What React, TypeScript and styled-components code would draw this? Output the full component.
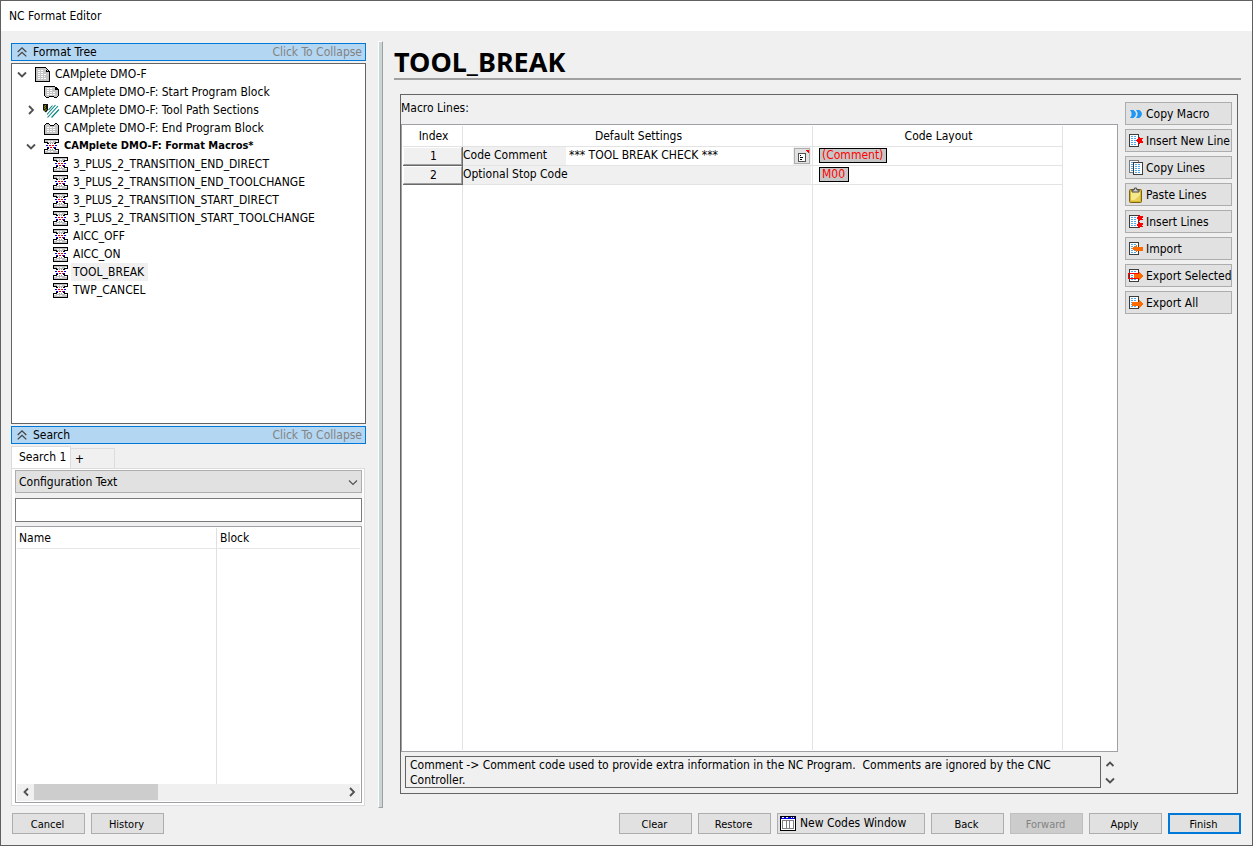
import React from "react";
import styled, { createGlobalStyle, css } from "styled-components";

const GlobalStyle = createGlobalStyle`
  *, *::before, *::after { box-sizing: border-box; }
  body {
    margin: 0;
    background: #f0f0f0;
    color: #000;
    font: 12px/18px "DejaVu Sans Condensed", "Noto Sans", sans-serif;
  }
  button, input, select { font: inherit; color: inherit; margin: 0; border-radius: 0; }
  ul { list-style: none; margin: 0; padding: 0; }
  svg { display: block; flex: none; }
`;

/* ---------- window frame ---------- */

const Window = styled.div`
  display: flex;
  flex-direction: column;
  min-height: 100vh;
  border: 1px solid #606060;
  background: #f0f0f0;
`;

const TitleBar = styled.header`
  height: 30px;
  padding: 0 8px;
  line-height: 30px;
  background: #fff;
`;

const Main = styled.main`
  flex: 1;
  display: flex;
  padding: 10px 11px 0 10px;
`;

const LeftColumn = styled.div`
  flex: none;
  width: 355px;
  display: flex;
  flex-direction: column;
  gap: 2px;
  padding: 2px 0;
`;

const Splitter = styled.div`
  flex: none;
  width: 5px;
  margin: 0 11px 0 12px;
  background: #c8d7d6;
  border: solid;
  border-width: 1px;
  border-color: #fff #a0a0a0 #a0a0a0 #fff;
`;

const RightColumn = styled.div`
  flex: 1;
  min-width: 0;
  display: flex;
  flex-direction: column;
`;

/* ---------- collapsible sections ---------- */

const Section = styled.section`
  flex: 1 1 0;
  display: flex;
  flex-direction: column;
  gap: 2px;
`;

const CollapseBar = styled.button`
  flex: none;
  display: flex;
  align-items: center;
  height: 18px;
  padding: 0 3px 0 5px;
  border: 1px solid #0078d7;
  background: #b3d6f2;
  line-height: 16px;
  text-align: left;
`;

const CollapseTitle = styled.span`
  flex: 1;
  padding-left: 6px;
`;

const CollapseHint = styled.span`
  color: #838383;
`;

const TreeBox = styled.div`
  flex: 1;
  padding-top: 1px;
  border: 1px solid #646464;
  background: #fff;
`;

const TreeRow = styled.div<{ $level: number }>`
  display: flex;
  align-items: center;
  height: 18px;
  padding-left: ${(p) => 4 + p.$level * 9}px;
  white-space: nowrap;
`;

const Twisty = styled.button`
  width: 11px;
  height: 16px;
  margin-right: 8px;
  padding: 0;
  border: 0;
  background: none;
  display: flex;
  align-items: center;
  justify-content: center;
`;

const TwistySpace = styled.span`
  width: 11px;
  margin-right: 8px;
`;

const TreeLabel = styled.span<{ $bold?: boolean; $selected?: boolean }>`
  margin-left: 3px;
  padding: 0 4px 0 2px;
  background: ${(p) => (p.$selected ? "#f0f0f0" : "transparent")};
  ${(p) =>
    p.$bold &&
    css`
      font-size: 11px;
      font-weight: 700;
    `}
`;

/* ---------- search ---------- */

const SearchBody = styled.div`
  flex: 1;
  display: flex;
  flex-direction: column;
  margin-right: 1px;
`;

const Tabs = styled.div`
  display: flex;
  align-items: flex-end;
  height: 22px;
`;

const Tab = styled.button<{ $active?: boolean }>`
  height: ${(p) => (p.$active ? 23 : 20)}px;
  width: ${(p) => (p.$active ? 60 : 44)}px;
  margin-bottom: ${(p) => (p.$active ? -1 : 0)}px;
  padding: ${(p) => (p.$active ? "0 0 2px 7px" : "1px 0 0 4px")};
  border: 1px solid #dcdcdc;
  border-bottom: 0;
  border-left-width: ${(p) => (p.$active ? 1 : 0)}px;
  background: ${(p) => (p.$active ? "#fff" : "#f0f0f0")};
  text-align: left;
  white-space: nowrap;
`;

const TabPanel = styled.div`
  flex: 1;
  display: flex;
  flex-direction: column;
  padding: 1px 2px 2px 3px;
  border: 1px solid #dcdcdc;
  background: #fff;
`;

const SearchForm = styled.div`
  flex: 1;
  display: flex;
  flex-direction: column;
  background: #f0f0f0;
`;

const SelectWrap = styled.div`
  position: relative;
  margin-bottom: 5px;
`;

const Select = styled.select`
  display: block;
  width: 100%;
  height: 23px;
  padding: 2px 24px 0 3px;
  border: 1px solid #adadad;
  background: #e1e1e1;
  appearance: none;
`;

const SelectArrow = styled.span`
  position: absolute;
  right: 4px;
  top: 7px;
  pointer-events: none;
`;

const SearchInput = styled.input`
  width: 100%;
  height: 24px;
  margin-bottom: 4px;
  padding: 0 4px;
  border: 1px solid #7a7a7a;
  background: #fff;
`;

const ResultBox = styled.div`
  flex: 1;
  display: flex;
  flex-direction: column;
  padding: 1px;
  border: 1px solid #a0a0a4;
  background: #fff;
`;

const ResultArea = styled.div`
  flex: 1;
  display: flex;
`;

const ResultTable = styled.table`
  width: 100%;
  border-collapse: separate;
  border-spacing: 0;
  table-layout: fixed;

  th, td {
    padding: 0 3px;
    text-align: left;
    font-weight: 400;
  }
  th {
    height: 21px;
    border-bottom: 1px solid #e5e5e5;
  }
  th:first-child, td:first-child {
    width: 200px;
    padding-left: 2px;
    border-right: 1px solid #e0e0e0;
  }
`;

const ScrollBar = styled.div`
  display: flex;
  height: 17px;
  padding-bottom: 1px;
  background: #f0f0f0;
`;

const ScrollTrack = styled.div`
  flex: 1;
`;

const ScrollThumb = styled.div`
  width: 40%;
  height: 100%;
  background: #cdcdcd;
`;

const ScrollButton = styled.button`
  width: 17px;
  height: 16px;
  padding: 0;
  border: 0;
  background: none;
  display: flex;
  align-items: center;
  justify-content: center;
`;

/* ---------- macro editor ---------- */

const Title = styled.h1`
  height: 39px;
  margin: 0 0 14px;
  border-bottom: 2px solid #a0a0a0;
  font: 700 27px/42px "Noto Sans", "Open Sans", sans-serif;
`;

const Group = styled.section`
  flex: 1;
  display: flex;
  gap: 7px;
  margin: 0 3px 14px 6px;
  padding: 0 5px 5px 0;
  border: 1px solid #646464;
`;

const Editor = styled.div`
  flex: 1;
  min-width: 0;
  display: flex;
  flex-direction: column;
`;

const EditorCaption = styled.div`
  height: 29px;
  line-height: 27px;
`;

const GridBox = styled.div`
  flex: 1;
  display: flex;
  padding: 1px;
  border: 1px solid #a0a0a4;
  background: #fff;
`;

const Grid = styled.table`
  width: 100%;
  border-collapse: separate;
  border-spacing: 0;
  table-layout: fixed;

  th, td {
    padding: 0;
    border-right: 1px solid #e3e3e3;
    font-weight: 400;
  }
  thead th {
    height: 21px;
    padding-left: 2px;
    border-bottom: 1px solid #e3e3e3;
  }
  tbody td {
    height: 19px;
    border-bottom: 1px solid #e3e3e3;
  }
  tbody th {
    height: 19px;
    border-right-color: #696969;
    border-bottom: 1px solid #696969;
  }
  th:last-child, td:last-child {
    border-right: 0;
  }
  tbody td:last-child, thead th:last-child {
    border-bottom: 0;
  }
  tbody tr:last-child td {
    height: auto;
    border-bottom: 0;
  }
`;

const Col = styled.col<{ $width?: number }>`
  ${(p) => p.$width && `width: ${p.$width}px;`}
`;

const RowIndex = styled.div`
  height: 18px;
  padding-left: 2px;
  border: solid;
  border-width: 1px;
  border-color: #fff #a0a0a0 #a0a0a0 #fff;
  background: #f0f0f0;
  line-height: 17px;
  text-align: center;
`;

const Setting = styled.div`
  display: flex;
  height: 18px;
  margin-right: 1px;
  background: #f0f0f0;
  line-height: 16px;
`;

const SettingLabel = styled.label`
  width: 103px;
  white-space: nowrap;
`;

const SettingInput = styled.input`
  flex: 1;
  min-width: 0;
  height: 18px;
  padding: 0 3px 2px;
  border: 0;
  background: #fff;
`;

const ListButton = styled.button`
  width: 16px;
  height: 16px;
  margin: 1px 1px 0;
  padding: 0;
  border: 1px solid #adadad;
  background: #e1e1e1;
`;

const CodeCell = styled.div`
  display: flex;
  align-items: center;
  height: 18px;
  padding: 0 6px 2px;
`;

const CodeChip = styled.button`
  height: 15px;
  padding: 0 3px 0 2px;
  border: 1px solid #000;
  background: #c6c6c6;
  color: #f00;
  line-height: 13px;
`;

const InfoRow = styled.div`
  display: flex;
  margin: 4px 0 0 4px;
`;

const InfoText = styled.p`
  flex: 1;
  height: 32px;
  margin: 0;
  padding: 1px 20px 0 4px;
  border: 1px solid #646464;
  line-height: 15px;
  white-space: pre-wrap;
`;

const InfoArrows = styled.div`
  width: 17px;
  display: flex;
  flex-direction: column;
`;

const SideButtons = styled.div`
  flex: none;
  width: 107px;
  display: flex;
  flex-direction: column;
  gap: 4px;
  padding-top: 7px;
`;

const SideButton = styled.button`
  display: flex;
  align-items: center;
  gap: 2px;
  height: 23px;
  padding: 0 0 0 2px;
  border: 1px solid #adadad;
  background: #e1e1e1;
  white-space: nowrap;
`;

/* ---------- footer ---------- */

const Footer = styled.footer`
  display: flex;
  gap: 6px;
  padding: 5px 11px 11px;
`;

const FooterSpace = styled.div`
  flex: 1;
`;

const FooterButton = styled.button<{ $wide?: boolean; $primary?: boolean }>`
  display: flex;
  align-items: center;
  justify-content: ${(p) => (p.$wide ? "flex-start" : "center")};
  gap: 4px;
  width: ${(p) => (p.$wide ? 148 : 73)}px;
  height: 21px;
  padding: ${(p) => (p.$wide ? "0 0 0 2px" : "1px 2px 0 0")};
  border: ${(p) => (p.$primary ? "2px solid #0078d7" : "1px solid #adadad")};
  background: #e1e1e1;
  font-size: ${(p) => (p.$wide ? 12 : 11)}px;
  line-height: 17px;
  white-space: nowrap;

  &:disabled {
    border-color: #bfbfbf;
    background: #cccccc;
    color: #838383;
  }
`;

/* ---------- icons ---------- */

const Svg = ({ w, h, children }: { w: number; h: number; children: React.ReactNode }) => (
  <svg width={w} height={h} viewBox={`0 0 ${w} ${h}`} shapeRendering="crispEdges" fill="none" aria-hidden="true">
    {children}
  </svg>
);

const chevronPaths = {
  down: "M1 3.5 5 7.5 9 3.5",
  up: "M1.5 7 5 3.5 8.5 7",
  right: "M3 1 7 5 3 9",
  left: "M7 1.5 3.5 5 7 8.5",
};

const Chevron = ({ dir, thin }: { dir: keyof typeof chevronPaths; thin?: boolean }) => (
  <svg width="10" height="10" viewBox="0 0 10 10" fill="none" aria-hidden="true">
    <path d={chevronPaths[dir]} stroke="#505050" strokeWidth={thin ? 1.1 : 1.8} />
  </svg>
);

const DoubleUp = () => (
  <svg width="10" height="10" viewBox="0 0 10 10" fill="none" aria-hidden="true">
    <path d="M.7 5 5 .9 9.3 5M.7 9.4 5 5.3 9.3 9.4" stroke="#444" strokeWidth="1.3" />
  </svg>
);

const PageIcon = () => (
  <Svg w={15} h={15}>
    <path d="M.5.5h10l4 4v10h-14z" fill="#c6c6c6" stroke="#000" />
    <path d="M10 0h1v5h4v-1h-3z" fill="#000" />
    <path d="M3 3.5h6M3 5.5h6M3 7.5h9M3 9.5h7M3 11.5h9" stroke="#fff" strokeDasharray="2 1" />
  </Svg>
);

const StartIcon = () => (
  <Svg w={15} h={13}>
    <path d="M.5.5h10l4 3v6l-2 2h-2l-2-1.5h-2l-2 1.5h-2l-2-2z" fill="#c6c6c6" stroke="#000" />
    <path d="M10 1h1v3h4v-1h-3z" fill="#000" />
    <path d="M3 2.5h6M3 4.5h6M3 6.5h9M3 8.5h8" stroke="#fff" strokeDasharray="2 1" />
  </Svg>
);

const EndIcon = () => (
  <Svg w={15} h={13}>
    <path d="M.5 12.5v-9l2-2h2l2 2h3l2-2h1l2 2v9z" fill="#c6c6c6" stroke="#000" />
    <path d="M3 5.5h9M3 7.5h9M3 9.5h9" stroke="#fff" strokeDasharray="2 1" />
  </Svg>
);

const ToolPathIcon = () => (
  <svg width="15" height="15" viewBox="1 0 15 15" fill="none" overflow="visible" aria-hidden="true">
    <path d="M0 1h5v6l-2 2.5L0 7z" fill="#111" />
    <path d="M1 3.500l2-1M1 5.500l2-1M1.500 7.500l2-1" stroke="#b5b000" />
    <path d="M4 11.5 12.5 2M4.500 14.500 15 3M8.500 14.500 16 6.500M5.500 7 9.500 2.500" stroke="#008080" strokeWidth="1.100" />
  </svg>
);

const MacroIcon = () => (
  <Svg w={15} h={15}>
    <path d="M1 1h13v1h-2v2h-9v-1h-2zM3 11h9v1h2v2h-13v-2h2z" fill="#c0c0c0" />
    <path d="M4 2.500h6M4 12.500h6" stroke="#fff" strokeDasharray="2 1" />
    <path
      d="M.5 4V.5H14.500V3M0 3.500h4M3 4.500h2M11 3.500h4M10 4.500h2M.5 11v3.500H14.500V11M0 10.500h4M3 9.500h2M11 10.500h4M10 9.500h2"
      stroke="#000"
    />
    <path d="M2 6.500h3M11 6.500h2M3 8.500h3M10 8.500h2" stroke="#0000d8" strokeDasharray="2 1" />
    <path d="M5 6.500h5M6 8.500h4" stroke="#e00000" strokeDasharray="2 1" />
    <path d="M6 10.500h4M6 4.500h3" stroke="#909090" strokeDasharray="1 1" />
  </Svg>
);

const ListIcon = () => (
  <Svg w={14} h={14}>
    <path d="M3.5 4.5h7v8h-7z" fill="#fff" stroke="#505050" />
    <path d="M5 6.5h1M5 8.5h3M5 10.5h2" stroke="#000" />
    <path d="M11 1h3v3h-1v-1h-1v-1h-1z" fill="#f00" />
  </Svg>
);

const Doc = ({ x = 1, y = 1, muted }: { x?: number; y?: number; muted?: boolean }) => (
  <>
    <rect x={x + 0.5} y={y + 0.5} width="9" height="12" fill="#fff" stroke={muted ? "#7a7a7a" : "#3c3c3c"} />
    <path
      d={`M${x + 2} ${y + 2.5}h6M${x + 2} ${y + 4.5}h6M${x + 2} ${y + 6.5}h6M${x + 2} ${y + 8.5}h6M${x + 2} ${y + 10.5}h6`}
      stroke="#4aa8f0"
      strokeDasharray="2 1"
    />
  </>
);

const CopyMacroIcon = () => (
  <svg width="16" height="16" viewBox="0 0 16 16" fill="none" aria-hidden="true">
    <path d="M2 4h3.500Q8 6 8 8T5.500 12H2l1.500-2.500v-3zM8 4h3.500Q14 6 14 8T11.500 12H8l1.500-2.500v-3z" fill="#1e96f5" />
  </svg>
);
const InsertNewIcon = () => (
  <Svg w={16} h={16}>
    <Doc />
    <path d="M8 7l3-3 1 1h3v1l-2 1 2 2v1h-3l-1 1z" fill="#f00" />
  </Svg>
);
const CopyLinesIcon = () => (
  <Svg w={16} h={16}>
    <Doc x={1} y={0} muted />
    <Doc x={5} y={2} />
  </Svg>
);
const PasteIcon = () => (
  <svg width="16" height="16" viewBox="0 0 16 16" fill="none" aria-hidden="true">
    <rect x="1.5" y="2.5" width="12" height="13" rx="1" fill="#d8b62e" stroke="#7d6410" />
    <path d="M3 4h9v9.5H3z" fill="#f6e88c" />
    <path d="M12 8v5.5H6z" fill="#e8cf58" />
    <path d="M4 5V3h2l.5-2h2L9 3h2v2z" fill="#d0d0d0" stroke="#444" />
  </svg>
);
const InsertLinesIcon = () => (
  <Svg w={16} h={16}>
    <Doc />
    <path d="M9 4l2-3 1 1h3v1l-1 1 1 2h-3l-1 1zM9 11l2-3 1 1h3v1l-1 1 1 2h-3l-1 1z" fill="#f00" />
  </Svg>
);
const ImportIcon = () => (
  <Svg w={16} h={16}>
    <Doc />
    <path d="M4 7.500l5-4v2h6v4h-6v2z" fill="#ff6a00" />
  </Svg>
);
const ExportSelectedIcon = () => (
  <Svg w={16} h={16}>
    <Doc />
    <path d="M.5 5.500h10v5h-10z" stroke="#f00" />
    <path d="M16 8l-5-4v2h-5v4h5v2z" fill="#ff6a00" />
  </Svg>
);
const ExportAllIcon = () => (
  <Svg w={16} h={16}>
    <Doc />
    <path d="M16 9l-5-4v2h-7v4h7v2z" fill="#ff6a00" />
  </Svg>
);

const CodesWindowIcon = () => (
  <Svg w={16} h={15}>
    <rect x=".5" y=".5" width="15" height="14" fill="#fff" stroke="#000" />
    <path d="M1 1h14v2h-14z" fill="#0000e0" />
    <path d="M2 1.5h2M6 1.5h2M11 1.5h1M13 1.5h1" stroke="#fff" />
    <path d="M2.5 4.5h11v8h-11zM6.500 4v9M9.500 4v9" stroke="#808080" />
  </Svg>
);

/* ---------- data ---------- */

type Node = {
  label: string;
  icon: React.ComponentType;
  bold?: boolean;
  selected?: boolean;
  open?: boolean;
  children?: Node[];
};

const macroNames = [
  "3_PLUS_2_TRANSITION_END_DIRECT",
  "3_PLUS_2_TRANSITION_END_TOOLCHANGE",
  "3_PLUS_2_TRANSITION_START_DIRECT",
  "3_PLUS_2_TRANSITION_START_TOOLCHANGE",
  "AICC_OFF",
  "AICC_ON",
  "TOOL_BREAK",
  "TWP_CANCEL",
];

const tree: Node = {
  label: "CAMplete DMO-F",
  icon: PageIcon,
  open: true,
  children: [
    { label: "CAMplete DMO-F: Start Program Block", icon: StartIcon },
    { label: "CAMplete DMO-F: Tool Path Sections", icon: ToolPathIcon, children: [] },
    { label: "CAMplete DMO-F: End Program Block", icon: EndIcon },
    {
      label: "CAMplete DMO-F: Format Macros*",
      icon: MacroIcon,
      bold: true,
      open: true,
      children: macroNames.map((label) => ({ label, icon: MacroIcon, selected: label === "TOOL_BREAK" })),
    },
  ],
};

const sideActions: [string, React.ComponentType][] = [
  ["Copy Macro", CopyMacroIcon],
  ["Insert New Line", InsertNewIcon],
  ["Copy Lines", CopyLinesIcon],
  ["Paste Lines", PasteIcon],
  ["Insert Lines", InsertLinesIcon],
  ["Import", ImportIcon],
  ["Export Selected", ExportSelectedIcon],
  ["Export All", ExportAllIcon],
];

/* ---------- parts ---------- */

const TreeItem = ({ node, level }: { node: Node; level: number }) => (
  <li role="treeitem" aria-expanded={node.children ? !!node.open : undefined} aria-selected={!!node.selected}>
    <TreeRow $level={level}>
      {node.children ? (
        <Twisty aria-label={node.open ? "Collapse" : "Expand"}>
          <Chevron dir={node.open ? "down" : "right"} />
        </Twisty>
      ) : (
        <TwistySpace />
      )}
      <node.icon />
      <TreeLabel $bold={node.bold} $selected={node.selected}>
        {node.label}
      </TreeLabel>
    </TreeRow>
    {node.open && node.children && (
      <ul role="group">
        {node.children.map((child) => (
          <TreeItem key={child.label} node={child} level={level + 1} />
        ))}
      </ul>
    )}
  </li>
);

const SectionHeader = ({ title }: { title: string }) => (
  <CollapseBar>
    <DoubleUp />
    <CollapseTitle>{title}</CollapseTitle>
    <CollapseHint>Click To Collapse</CollapseHint>
  </CollapseBar>
);

export default function App() {
  return (
    <>
      <GlobalStyle />
      <Window>
        <TitleBar>NC Format Editor</TitleBar>
        <Main>
          <LeftColumn>
            <Section>
              <SectionHeader title="Format Tree" />
              <TreeBox>
                <ul role="tree" aria-label="Format Tree">
                  <TreeItem node={tree} level={0} />
                </ul>
              </TreeBox>
            </Section>
            <Section>
              <SectionHeader title="Search" />
              <SearchBody>
                <Tabs role="tablist">
                  <Tab role="tab" aria-selected $active>
                    Search 1
                  </Tab>
                  <Tab role="tab" aria-selected={false}>
                    +
                  </Tab>
                </Tabs>
                <TabPanel role="tabpanel">
                  <SearchForm>
                    <SelectWrap>
                      <Select aria-label="Search in" defaultValue="text">
                        <option value="text">Configuration Text</option>
                      </Select>
                      <SelectArrow>
                        <Chevron dir="down" thin />
                      </SelectArrow>
                    </SelectWrap>
                    <SearchInput type="text" aria-label="Search text" />
                    <ResultBox>
                      <ResultArea>
                        <ResultTable>
                          <thead>
                            <tr>
                              <th>Name</th>
                              <th>Block</th>
                            </tr>
                          </thead>
                          <tbody>
                            <tr>
                              <td />
                              <td />
                            </tr>
                          </tbody>
                        </ResultTable>
                      </ResultArea>
                      <ScrollBar>
                        <ScrollButton aria-label="Scroll left">
                          <Chevron dir="left" />
                        </ScrollButton>
                        <ScrollTrack>
                          <ScrollThumb />
                        </ScrollTrack>
                        <ScrollButton aria-label="Scroll right">
                          <Chevron dir="right" />
                        </ScrollButton>
                      </ScrollBar>
                    </ResultBox>
                  </SearchForm>
                </TabPanel>
              </SearchBody>
            </Section>
          </LeftColumn>
          <Splitter />
          <RightColumn>
            <Title>TOOL_BREAK</Title>
            <Group>
              <Editor>
                <EditorCaption>Macro Lines:</EditorCaption>
                <GridBox>
                  <Grid>
                    <colgroup>
                      <Col $width={60} />
                      <Col $width={350} />
                      <Col $width={250} />
                      <Col />
                    </colgroup>
                    <thead>
                      <tr>
                        <th>Index</th>
                        <th>Default Settings</th>
                        <th>Code Layout</th>
                        <th />
                      </tr>
                    </thead>
                    <tbody>
                      <tr>
                        <th>
                          <RowIndex>1</RowIndex>
                        </th>
                        <td>
                          <Setting>
                            <SettingLabel htmlFor="code-comment">Code Comment</SettingLabel>
                            <SettingInput id="code-comment" defaultValue="*** TOOL BREAK CHECK ***" />
                            <ListButton aria-label="Choose value">
                              <ListIcon />
                            </ListButton>
                          </Setting>
                        </td>
                        <td>
                          <CodeCell>
                            <CodeChip>(Comment)</CodeChip>
                          </CodeCell>
                        </td>
                        <td />
                      </tr>
                      <tr>
                        <th>
                          <RowIndex>2</RowIndex>
                        </th>
                        <td>
                          <Setting>Optional Stop Code</Setting>
                        </td>
                        <td>
                          <CodeCell>
                            <CodeChip>M00</CodeChip>
                          </CodeCell>
                        </td>
                        <td />
                      </tr>
                      <tr>
                        <td />
                        <td />
                        <td />
                        <td />
                      </tr>
                    </tbody>
                  </Grid>
                </GridBox>
                <InfoRow>
                  <InfoText>
                    {
                      "Comment -> Comment code used to provide extra information in the NC Program.  Comments are ignored by the CNC Controller."
                    }
                  </InfoText>
                  <InfoArrows>
                    <ScrollButton aria-label="Scroll up">
                      <Chevron dir="up" />
                    </ScrollButton>
                    <ScrollButton aria-label="Scroll down">
                      <Chevron dir="down" />
                    </ScrollButton>
                  </InfoArrows>
                </InfoRow>
              </Editor>
              <SideButtons>
                {sideActions.map(([label, Icon]) => (
                  <SideButton key={label}>
                    <Icon />
                    {label}
                  </SideButton>
                ))}
              </SideButtons>
            </Group>
          </RightColumn>
        </Main>
        <Footer>
          <FooterButton>Cancel</FooterButton>
          <FooterButton>History</FooterButton>
          <FooterSpace />
          <FooterButton>Clear</FooterButton>
          <FooterButton>Restore</FooterButton>
          <FooterButton $wide>
            <CodesWindowIcon />
            New Codes Window
          </FooterButton>
          <FooterButton>Back</FooterButton>
          <FooterButton disabled>Forward</FooterButton>
          <FooterButton>Apply</FooterButton>
          <FooterButton $primary>Finish</FooterButton>
        </Footer>
      </Window>
    </>
  );
}
